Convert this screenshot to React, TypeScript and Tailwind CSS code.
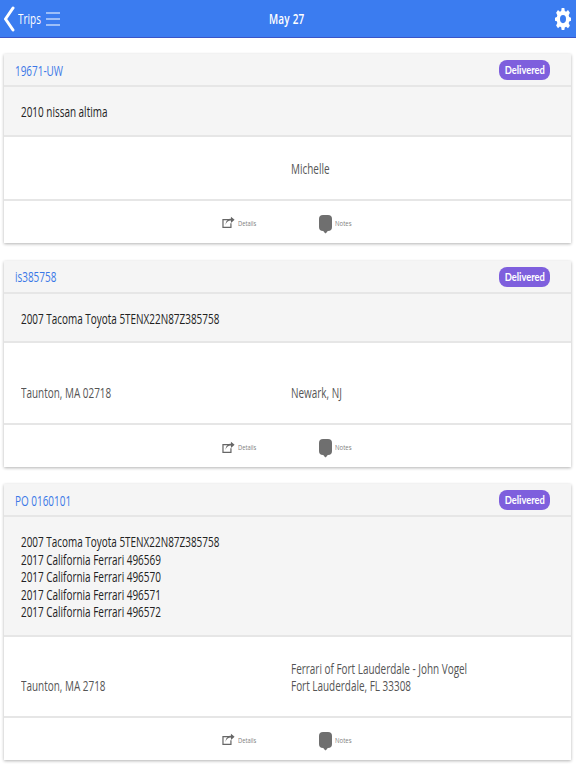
import type { ReactNode } from 'react'

interface Trip {
  id: string
  items: string[]
  from: string
  to: string[]
  bodyClass: string
  cardClass?: string
}

const trips: Trip[] = [
  { id: '19671-UW', items: ['2010 nissan altima'], from: '', to: ['Michelle'], bodyClass: 'h-[64px] pb-[21px]' },
  {
    id: 'is385758',
    items: ['2007 Tacoma Toyota 5TENX22N87Z385758'],
    from: 'Taunton, MA 02718',
    to: ['Newark, NJ'],
    bodyClass: 'h-[82px] pb-[22px]',
  },
  {
    id: 'PO 0160101',
    items: [
      '2007 Tacoma Toyota 5TENX22N87Z385758',
      '2017 California Ferrari 496569',
      '2017 California Ferrari 496570',
      '2017 California Ferrari 496571',
      '2017 California Ferrari 496572',
    ],
    from: 'Taunton, MA 2718',
    to: ['Ferrari of Fort Lauderdale - John Vogel', 'Fort Lauderdale, FL 33308'],
    bodyClass: 'h-[81px] pb-[21px]',
    cardClass: 'mt-[-1px]',
  },
]

// the screenshot is squeezed horizontally, so the text is too
function Narrow({ children }: { children: ReactNode }) {
  return <span className="block origin-left scale-x-[0.71] whitespace-nowrap">{children}</span>
}

function ShareIcon() {
  return (
    <svg width="13" height="13" viewBox="0 0 16 14" fill="none" className="text-[#666666]">
      <path d="M9 3.500H1.200V13H11V8" stroke="currentColor" strokeWidth="1.500" />
      <path d="M4.500 10C5 6.500 7.500 4.500 11 4.500V7.500L15.500 3.500L11 0V2.500C7 2.500 4.500 5.500 4.500 10Z" fill="currentColor" />
    </svg>
  )
}

function GearIcon() {
  return (
    <svg width="16" height="22" viewBox="0 0 24 24" preserveAspectRatio="none" className="text-white">
      <path
        fillRule="evenodd"
        fill="currentColor"
        d="M10 0h4l.7 3.300 2 .8L19.500 2.300l2.800 2.800-1.800 2.800.8 2L24 10.500v3.500l-2.700.6-.8 2 1.800 2.800-2.800 2.800-2.800-1.800-2 .8L14 24h-4l-.7-3-2-.8-2.800 1.800-2.800-2.800 1.800-2.800-.8-2L0 14v-3.500l2.700-.6.8-2-1.800-2.800 2.800-2.800 2.800 1.800 2-.8L10 0ZM12 7.500a4.500 4.500 0 1 0 0 9 4.500 4.500 0 0 0 0-9Z"
      />
    </svg>
  )
}

function TripCard({ trip }: { trip: Trip }) {
  return (
    <div className={`mx-[4px] w-[567px] bg-white shadow-[0_1px_3px_rgba(0,0,0,0.3)] ${trip.cardClass ?? ''}`}>
      {/* Header */}
      <div className="flex h-[33px] items-center justify-between border-b-2 border-[#e6e6e6] bg-[#f5f5f5] pl-[11px] pr-[21px] pt-[1px]">
        <span className="text-[14px] font-medium text-[#3b78e7]">
          <Narrow>{trip.id}</Narrow>
        </span>
        <span className="flex h-[20px] w-[51px] items-center justify-center rounded-[8px] bg-[#7e5fdd] font-['Lato',sans-serif] text-[12px] font-bold text-white">
          <span className="block scale-x-[0.78] whitespace-nowrap">Delivered</span>
        </span>
      </div>

      {/* Vehicles */}
      <div className="border-b-2 border-[#e6e6e6] bg-[#f5f5f5] px-[17px] pb-[14px] pt-[16px] text-[14px] font-medium leading-[17.5px] text-[#222222]">
        {trip.items.map((item) => (
          <Narrow key={item}>{item}</Narrow>
        ))}
      </div>

      {/* Route */}
      <div
        className={`grid grid-cols-[270px_1fr] items-end border-b-2 border-[#e6e6e6] px-[17px] text-[14px] leading-[17.5px] text-[#555555] ${trip.bodyClass}`}
      >
        <div>
          <Narrow>{trip.from}</Narrow>
        </div>
        <div>
          {trip.to.map((line) => (
            <Narrow key={line}>{line}</Narrow>
          ))}
        </div>
      </div>

      {/* Actions */}
      <div className="flex h-[42px] items-center pl-[218px] pt-[2px] text-[8px] text-[#808080]">
        <ShareIcon />
        <span className="ml-[3px] w-[81px]">
          <span className="block origin-left scale-x-[0.72]">Details</span>
        </span>
        <div className="relative mr-[3px] h-[16px] w-[13px] rounded-[4px] bg-[#6f6f6f]">
          <div className="absolute bottom-[-2px] left-[5px] h-[3px] w-[3px] rotate-45 bg-[#6f6f6f]" />
        </div>
        <span>
          <span className="block origin-left scale-x-[0.75]">Notes</span>
        </span>
      </div>
    </div>
  )
}

export default function App() {
  return (
    <div className="h-[768px] w-[576px] overflow-hidden bg-white font-['Open_Sans',sans-serif]">
      <header className="flex h-[38px] items-center border-b border-[#3a55c8] bg-[#3b7cf0] text-white">
        <div className="flex w-[269px] items-center">
          <svg width="12" height="26" viewBox="0 0 12 26" fill="none" className="ml-[3px]">
            <path d="M10 2L2.500 13L10 24" stroke="currentColor" strokeWidth="3" strokeLinecap="round" strokeLinejoin="round" />
          </svg>
          <span className="ml-[3px] w-[28px] text-[14px]">
            <Narrow>Trips</Narrow>
          </span>
          <svg width="14" height="14" viewBox="0 0 14 14" className="text-white">
            <path d="M0 1h14M0 7h14M0 13h14" stroke="currentColor" strokeWidth="1.200" />
          </svg>
        </div>
        <div className="w-[40px] text-[14px] font-semibold tracking-[0.3px]">
          <Narrow>May 27</Narrow>
        </div>
        <div className="ml-auto mr-[5px] flex">
          <GearIcon />
        </div>
      </header>
      <div className="flex flex-col gap-[18px] pt-[16px]">
        {trips.map((trip) => (
          <TripCard key={trip.id} trip={trip} />
        ))}
      </div>
    </div>
  )
}
